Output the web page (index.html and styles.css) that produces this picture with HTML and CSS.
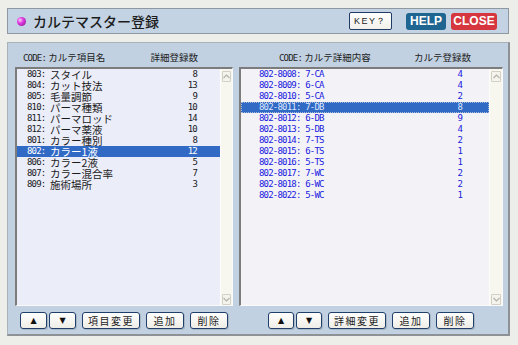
FILE: index.html
```html
<!DOCTYPE html>
<html lang="ja">
<head>
    <meta charset="UTF-8">
    <title>カルテマスター登録</title>
    <link rel="stylesheet" href="styles.css">
</head>
<body>
    <div class="screen">
        <div class="titlebar">
            <span class="ball"></span>
            <h1>カルテマスター登録</h1>
            <div class="top-buttons">
                <button class="btn-key">KEY？</button>
                <button class="btn-help">HELP</button>
                <button class="btn-close">CLOSE</button>
            </div>
        </div>

        <div class="panel">
            <!-- left: karte items -->
            <div class="column col-left">
                <div class="col-head">
                    <span><span class="mono">CODE:</span> カルテ項目名</span>
                    <span>詳細登録数</span>
                </div>
                <div class="listbox">
                    <div class="rows">
                        <div class="row"><span class="mono">803: </span><span class="name">スタイル</span><span class="num mono">8</span></div>
                        <div class="row"><span class="mono">804: </span><span class="name">カット技法</span><span class="num mono">13</span></div>
                        <div class="row"><span class="mono">805: </span><span class="name">毛量調節</span><span class="num mono">9</span></div>
                        <div class="row"><span class="mono">810: </span><span class="name">パーマ種類</span><span class="num mono">10</span></div>
                        <div class="row"><span class="mono">811: </span><span class="name">パーマロッド</span><span class="num mono">14</span></div>
                        <div class="row"><span class="mono">812: </span><span class="name">パーマ薬液</span><span class="num mono">10</span></div>
                        <div class="row"><span class="mono">801: </span><span class="name">カラー種別</span><span class="num mono">8</span></div>
                        <div class="row selected"><span class="mono">802: </span><span class="name">カラー1液</span><span class="num mono">12</span></div>
                        <div class="row"><span class="mono">806: </span><span class="name">カラー2液</span><span class="num mono">5</span></div>
                        <div class="row"><span class="mono">807: </span><span class="name">カラー混合率</span><span class="num mono">7</span></div>
                        <div class="row"><span class="mono">809: </span><span class="name">施術場所</span><span class="num mono">3</span></div>
                    </div>
                    <div class="scrollbar">
                        <span class="sb-btn"><svg width="7" height="5" viewBox="0 0 7 5"><path d="M0.5 4L3.5 1L6.5 4" fill="none" stroke="#b4b3ab" stroke-width="1.2"/></svg></span>
                        <span class="sb-btn"><svg width="7" height="5" viewBox="0 0 7 5"><path d="M0.5 1L3.5 4L6.5 1" fill="none" stroke="#b4b3ab" stroke-width="1.2"/></svg></span>
                    </div>
                </div>
                <div class="actions">
                    <div class="arrows">
                        <button class="btn btn-arrow">▲</button>
                        <button class="btn btn-arrow">▼</button>
                    </div>
                    <button class="btn btn-wide">項目変更</button>
                    <button class="btn btn-short">追加</button>
                    <button class="btn btn-short">削除</button>
                </div>
            </div>

            <!-- right: karte details -->
            <div class="column col-right">
                <div class="col-head">
                    <span><span class="mono">CODE:</span> カルテ詳細内容</span>
                    <span>カルテ登録数</span>
                </div>
                <div class="listbox">
                    <div class="rows">
                        <div class="row"><span class="mono">802-8008: 7-CA</span><span class="num mono">4</span></div>
                        <div class="row"><span class="mono">802-8009: 6-CA</span><span class="num mono">4</span></div>
                        <div class="row"><span class="mono">802-8010: 5-CA</span><span class="num mono">2</span></div>
                        <div class="row selected focus"><span class="mono">802-8011: 7-DB</span><span class="num mono">8</span></div>
                        <div class="row"><span class="mono">802-8012: 6-DB</span><span class="num mono">9</span></div>
                        <div class="row"><span class="mono">802-8013: 5-DB</span><span class="num mono">4</span></div>
                        <div class="row"><span class="mono">802-8014: 7-TS</span><span class="num mono">2</span></div>
                        <div class="row"><span class="mono">802-8015: 6-TS</span><span class="num mono">1</span></div>
                        <div class="row"><span class="mono">802-8016: 5-TS</span><span class="num mono">1</span></div>
                        <div class="row"><span class="mono">802-8017: 7-WC</span><span class="num mono">2</span></div>
                        <div class="row"><span class="mono">802-8018: 6-WC</span><span class="num mono">2</span></div>
                        <div class="row"><span class="mono">802-8022: 5-WC</span><span class="num mono">1</span></div>
                    </div>
                    <div class="scrollbar">
                        <span class="sb-btn"><svg width="7" height="5" viewBox="0 0 7 5"><path d="M0.5 4L3.5 1L6.5 4" fill="none" stroke="#b4b3ab" stroke-width="1.2"/></svg></span>
                        <span class="sb-btn"><svg width="7" height="5" viewBox="0 0 7 5"><path d="M0.5 1L3.5 4L6.5 1" fill="none" stroke="#b4b3ab" stroke-width="1.2"/></svg></span>
                    </div>
                </div>
                <div class="actions">
                    <div class="arrows">
                        <button class="btn btn-arrow">▲</button>
                        <button class="btn btn-arrow">▼</button>
                    </div>
                    <button class="btn btn-wide">詳細変更</button>
                    <button class="btn btn-short">追加</button>
                    <button class="btn btn-short">削除</button>
                </div>
            </div>
        </div>
    </div>
</body>
</html>
```

FILE: styles.css
```css
body {
    margin: 0;
    background-color: #ededea;
    font-family: "Noto Sans CJK JP", sans-serif;
    color: #1a1a1a;
}
.screen {
    padding: 8px 0 0 7px;
}
.mono {
    font-family: "DejaVu Sans Mono", monospace;
    font-size: 9px;
    letter-spacing: -0.8px;
}
/* Title bar */
.titlebar {
    width: 502px;
    height: 26px;
    box-sizing: border-box;
    border: 1px solid #8f98a1;
    background-color: #c3d3e3;
    display: flex;
    align-items: center;
    padding: 0 11px 0 9px;
}
.ball {
    width: 9px;
    height: 9px;
    border-radius: 50%;
    margin-right: 7px;
    background: radial-gradient(circle at 35% 35%, #ffd0ff 0, #e040e0 35%, #8a0a8a 100%);
}
h1 {
    margin: 0;
    font-size: 14px;
    font-weight: 500;
    line-height: 16px;
    color: #1c1c1c;
}
.top-buttons {
    margin-left: auto;
    display: flex;
    align-items: center;
}
.top-buttons button {
    padding: 0;
    cursor: pointer;
    font-family: "Liberation Sans", sans-serif;
}
.btn-key {
    width: 43px;
    height: 18px;
    margin-right: 14px;
    border: 1px solid #203c66;
    border-radius: 2px;
    background: linear-gradient(#ffffff, #f1f0ea);
    font-size: 9px;
    letter-spacing: 1.5px;
    color: #222;
}
.btn-help, .btn-close {
    height: 17px;
    border: none;
    border-radius: 3px;
    color: white;
    font-weight: bold;
    font-size: 12px;
}
.btn-help {
    width: 40px;
    margin-right: 5px;
    background-color: #1f6592;
}
.btn-close {
    width: 46px;
    background-color: #d6363d;
}
/* Main panel */
.panel {
    margin-top: 8px;
    width: 503px;
    height: 294px;
    box-sizing: border-box;
    border: 1px solid #a9b1b9;
    border-right: 2px solid #8e9296;
    border-bottom: 2px solid #8e9296;
    background-color: #c1d1e1;
    display: flex;
    gap: 6px;
    padding: 9px 5px 0 7px;
}
.column {
    display: flex;
    flex-direction: column;
}
.col-left {
    width: 218px;
}
.col-right {
    width: 264px;
}
.col-head {
    height: 11px;
    margin-bottom: 4px;
    display: flex;
    align-items: center;
    justify-content: space-between;
    font-size: 9.5px;
    line-height: 11px;
    color: #222;
}
.col-left .col-head {
    padding: 0 35px 0 8px;
}
.col-right .col-head {
    padding: 0 32px 0 40px;
}
.listbox {
    height: 239px;
    box-sizing: border-box;
    border-top: 2px solid #7c7c7c;
    border-left: 2px solid #7c7c7c;
    border-right: 1px solid #fafafa;
    border-bottom: 1px solid #fafafa;
    display: flex;
}
.col-left .listbox {
    background-color: #ebedf9;
}
.col-right .listbox {
    background-color: #f3f2f6;
}
.rows {
    flex: 1;
}
.row {
    height: 11px;
    line-height: 11px;
    display: flex;
    align-items: center;
    white-space: pre;
    box-sizing: border-box;
}
.col-left .row {
    padding: 0 23px 0 10px;
}
.col-right .row {
    padding: 0 27px 0 18px;
    color: #2020e0;
}
.name {
    font-size: 10.5px;
    line-height: 11px;
}
.num {
    margin-left: auto;
}
.row.selected {
    background-color: #316ac5;
    color: white;
}
.col-right .row.selected {
    color: #dce6ff;
}
.row.focus {
    outline: 1px dotted #a8b8d8;
    outline-offset: -1px;
}
.scrollbar {
    width: 12px;
    box-sizing: border-box;
    background-color: #f7f6ef;
    border-left: 1px solid #fdfdfb;
    display: flex;
    flex-direction: column;
    justify-content: space-between;
    padding: 2px 1px 0 1px;
}
.col-right .scrollbar {
    width: 13px;
}
.sb-btn {
    height: 9px;
    border: 1px solid #d3d1c7;
    border-radius: 1px;
    background-color: #f4f3ec;
    display: flex;
    align-items: center;
    justify-content: center;
}
/* Bottom buttons */
.actions {
    margin-top: 6px;
    display: flex;
    justify-content: center;
    gap: 6px;
}
.arrows {
    display: flex;
    gap: 2px;
}
.btn {
    height: 17px;
    padding: 0;
    border: 1px solid #213f6b;
    border-radius: 3px;
    background: linear-gradient(#ffffff, #eeede6);
    box-shadow: 1px 1px 0 rgba(0, 0, 0, 0.12);
    font-family: "Noto Sans CJK JP", sans-serif;
    font-size: 10px;
    line-height: 15px;
    letter-spacing: 1.5px;
    color: #222;
    cursor: pointer;
}
.btn-arrow {
    width: 27px;
    font-family: "DejaVu Sans", sans-serif;
    font-size: 8px;
    letter-spacing: 0;
    color: #111;
}
.col-right .btn-arrow {
    width: 26px;
}
.btn-wide {
    width: 58px;
}
.btn-short {
    width: 38px;
}
```
